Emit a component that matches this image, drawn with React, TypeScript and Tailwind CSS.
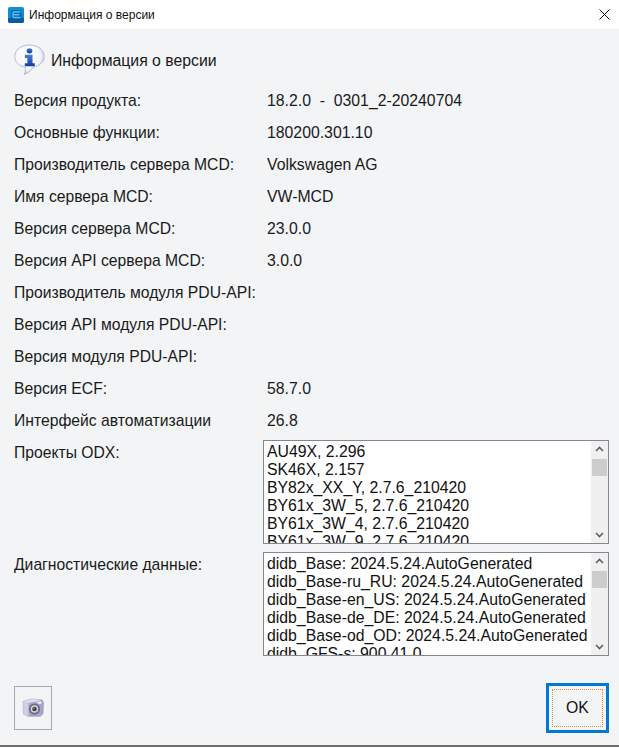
const font = {fontFamily: '"Liberation Sans", Arial, sans-serif'};

const INFO_ROWS = [
  {label: 'Версия продукта:', value: '18.2.0  -  0301_2-20240704'},
  {label: 'Основные функции:', value: '180200.301.10'},
  {label: 'Производитель сервера MCD:', value: 'Volkswagen AG'},
  {label: 'Имя сервера MCD:', value: 'VW-MCD'},
  {label: 'Версия сервера MCD:', value: '23.0.0'},
  {label: 'Версия API сервера MCD:', value: '3.0.0'},
  {label: 'Производитель модуля PDU-API:', value: ''},
  {label: 'Версия API модуля PDU-API:', value: ''},
  {label: 'Версия модуля PDU-API:', value: ''},
  {label: 'Версия ECF:', value: '58.7.0'},
  {label: 'Интерфейс автоматизации', value: '26.8'},
];

const ODX_PROJECTS = [
  'AU49X, 2.296',
  'SK46X, 2.157',
  'BY82x_XX_Y, 2.7.6_210420',
  'BY61x_3W_5, 2.7.6_210420',
  'BY61x_3W_4, 2.7.6_210420',
  'BY61x_3W_9, 2.7.6_210420',
];

const DIAG_DATA = [
  'didb_Base: 2024.5.24.AutoGenerated',
  'didb_Base-ru_RU: 2024.5.24.AutoGenerated',
  'didb_Base-en_US: 2024.5.24.AutoGenerated',
  'didb_Base-de_DE: 2024.5.24.AutoGenerated',
  'didb_Base-od_OD: 2024.5.24.AutoGenerated',
  'didb_GFS-s: 900.41.0',
];

function AppIcon() {
  return (
    <svg width="16" height="16" viewBox="0 0 16 16">
      <rect x="0" y="0" width="16" height="16" rx="2" fill="#0b8fd8" />
      <path d="M0 11h16v3a2 2 0 0 1-2 2H2a2 2 0 0 1-2-2z" fill="#0a5a9c" />
      <rect x="3" y="3" width="10.500" height="9.500" rx="1.500" fill="#0a5f9f" />
      <path d="M12.500 5H6a1 1 0 0 0-1 1v3.500a1 1 0 0 0 1 1h6.500M5.500 7.700h6" fill="none" stroke="#4fc8f5" strokeWidth="1.400" />
    </svg>
  );
}

function InfoIcon() {
  return (
    <svg width="32" height="32" viewBox="0 0 32 32">
      <defs>
        <radialGradient id="bubble" cx="0.42" cy="0.38" r="0.72">
          <stop offset="0" stopColor="#ffffff" />
          <stop offset="0.62" stopColor="#f4f4fc" />
          <stop offset="0.85" stopColor="#c9cce6" />
          <stop offset="1" stopColor="#9a9fbe" />
        </radialGradient>
        <linearGradient id="infoGlyph" x1="0" y1="0" x2="0" y2="1">
          <stop offset="0" stopColor="#3f7fe0" />
          <stop offset="1" stopColor="#123f9e" />
        </linearGradient>
      </defs>
      <path
        d="M15.500 1C7.500 1 .8 5.500.8 12.500c0 5.800 4.500 9.700 10.200 10.500.8 2.500.4 5-1 7.500 4.200-1.500 7.300-4.200 9-7.300 6.200-1.300 11.200-5 11.200-10.700C30.200 5.500 23.500 1 15.500 1z"
        fill="url(#bubble)"
        stroke="#a9adc8"
        strokeWidth="0.800"
      />
      <path d="M4 10c1-4 6-6.500 11-6.500 3 0 6 .8 8 2.300-6-1.500-14-.5-19 4.200z" fill="#ffffff" />
      <ellipse cx="15.500" cy="6.800" rx="2.900" ry="2.600" fill="url(#infoGlyph)" />
      <path d="M10.800 10.800h7.700v8.400h2.300v3H10.800v-3h2.600v-5.300h-2.600z" fill="url(#infoGlyph)" />
    </svg>
  );
}

function CameraIcon() {
  return (
    <svg width="22" height="20" viewBox="0 0 22 20">
      <path d="M1 3.500L9 1l11 .8 1.500 3-.5 11-2.500 2.500H6L1.500 16z" fill="#a5a6cf" stroke="#83849f" strokeWidth="0.500" />
      <path d="M1 3.500L6.500 5v13.200L1.500 16z" fill="#cfd0e8" />
      <path d="M1 3.500L9 1l11 .8-6 2-7.500 1.200z" fill="#dcdcec" />
      <rect x="15.500" y="3.500" width="4" height="2.200" fill="#f0f0f6" />
      <circle cx="12.500" cy="11" r="5.600" fill="#6b6b7c" />
      <circle cx="12.500" cy="11" r="3.800" fill="#d3d3da" />
      <circle cx="12.500" cy="11" r="2.300" fill="#3e3e48" />
      <circle cx="11.800" cy="10.300" r="0.700" fill="#a0a0aa" />
    </svg>
  );
}

function ScrollList({items}: {items: string[]}) {
  return (
    <div className="flex h-[104px] w-[346px] overflow-hidden border border-[#828790] bg-white">
      <div className="flex-1 overflow-hidden pl-[3px] pt-[2px] text-[15.8px] leading-[18px] text-[#111]">
        {items.map((item) => (
          <div key={item} className="whitespace-nowrap">
            {item}
          </div>
        ))}
      </div>
      <div className="flex w-[17px] flex-col items-center bg-[#f0f0f0] py-[5px]">
        <svg width="9" height="6" viewBox="0 0 9 6">
          <path d="M1 5l3.500-3.500L8 5" fill="none" stroke="#606060" strokeWidth="1.600" />
        </svg>
        <div className="mt-[7px] h-[17px] w-[15px] bg-[#cdcdcd]" />
        <svg className="mt-auto" width="9" height="6" viewBox="0 0 9 6">
          <path d="M1 1l3.500 3.500L8 1" fill="none" stroke="#606060" strokeWidth="1.600" />
        </svg>
      </div>
    </div>
  );
}

export default function App() {
  return (
    <div className="flex h-[749px] w-[619px] flex-col overflow-hidden bg-white" style={font}>
      {/* Title bar */}
      <div className="flex h-[29px] shrink-0 items-center bg-white pl-2">
        <AppIcon />
        <span className="ml-[5px] text-[12px] text-[#111]">Информация о версии</span>
        <svg className="ml-auto mr-[9px]" width="11" height="11" viewBox="0 0 11 11">
          <path d="M.5.5l10 10M10.500.5l-10 10" stroke="#111" strokeWidth="1" />
        </svg>
      </div>

      {/* Dialog body */}
      <div className="mb-[2px] flex flex-1 flex-col border-b-2 border-[#6d6d6d] bg-[#f3f4f6] pr-[10px] pl-[14px] text-[15.8px] text-[#1a1a1a]">
        <div className="mt-[15px] flex h-[32px] items-center gap-[5px]">
          <InfoIcon />
          <span className="mt-[2px]">Информация о версии</span>
        </div>

        <div className="mt-[9px] flex flex-col">
          {INFO_ROWS.map((row) => (
            <div key={row.label} className="flex h-[32px] items-center">
              <span className="w-[253px] shrink-0 whitespace-nowrap text-[15.7px]">{row.label}</span>
              <span className="whitespace-pre">{row.value}</span>
            </div>
          ))}
        </div>

        <div className="mt-[3px] flex items-start">
          <span className="mt-px w-[249px] text-[15.7px]">Проекты ODX:</span>
          <ScrollList items={ODX_PROJECTS} />
        </div>

        <div className="mt-[8px] flex items-start">
          <span className="mt-px w-[249px] text-[15.7px]">Диагностические данные:</span>
          <ScrollList items={DIAG_DATA} />
        </div>

        <div className="mt-[27px] flex items-center justify-between">
          <button className="flex h-[44px] w-[38px] items-center justify-center border border-[#a8a8a8] bg-[#f3f4f6]">
            <CameraIcon />
          </button>
          <button className="flex h-[50px] w-[63px] items-center justify-center border-[3px] border-[#0078d7] bg-[#f3f4f6] p-[3px] text-[#111]">
            <span className="flex h-full w-full items-center justify-center border border-dotted border-[#e08a3c]">
              OK
            </span>
          </button>
        </div>
      </div>
    </div>
  );
}
